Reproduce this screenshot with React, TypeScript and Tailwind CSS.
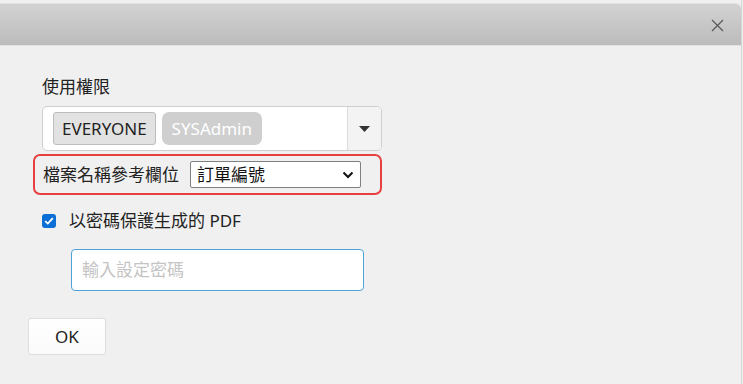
import React from "react";

export default function App() {
  return (
    <div
      className="w-[743px] h-[384px] bg-[#f0f0f0] overflow-hidden"
      style={{ fontFamily: '"Noto Sans", "Noto Sans CJK TC", sans-serif' }}
    >
      <div className="w-[742px] h-[384px] border-r border-[#d6d6d6] flex flex-col pt-[3px]">
        <div className="h-[43px] bg-gradient-to-b from-[#d2d2d2] to-[#bcbcbc] rounded-tr-[6px] border-b border-[#c4c4c4] flex items-center justify-end pr-[17px] border-t border-[#e2e2e2]">
          <svg width="13" height="13" viewBox="0 0 13 13" className="mt-[2px]">
            <path d="M1 1 L12 12 M12 1 L1 12" stroke="#5a5a5a" strokeWidth="1.3" fill="none" />
          </svg>
        </div>
        <div className="flex flex-col pl-[42px] pt-[30px]">
          <div className="h-[22px] flex items-center text-[17px] text-[#222]">使用權限</div>
          <div className="mt-[8px] w-[340px] h-[45px] bg-white border border-[#cfcfcf] rounded-[5px] flex overflow-hidden">
            <div className="flex-1 flex items-center gap-[6px] pl-[10px]">
              <div className="h-[33px] px-[8px] flex items-center bg-[#e2e2e2] border border-[#bdbdbd] rounded-[3px] text-[17px] text-[#222]">
                EVERYONE
              </div>
              <div className="h-[33px] px-[10px] flex items-center bg-[#cfcfcf] rounded-[7px] text-[17px] text-white">
                SYSAdmin
              </div>
            </div>
            <div className="w-[34px] border-l border-[#dcdcdc] bg-[#f3f3f3] flex items-center justify-center">
              <svg width="11" height="6" viewBox="0 0 11 6">
                <path d="M0 0 L11 0 L5.5 6 Z" fill="#333" />
              </svg>
            </div>
          </div>
          <div className="-ml-[9px] mt-[3px] w-[349px] h-[41px] border-2 border-[#e84040] rounded-[7px] flex items-center pl-[8px]">
            <div className="text-[17px] text-[#222] leading-[22px] whitespace-nowrap">檔案名稱參考欄位</div>
            <div className="ml-[11px] w-[171px] h-[27px] bg-white border border-[#808080] rounded-[2px] flex items-center justify-between pl-[6px] pr-[6px]">
              <span className="text-[17px] text-[#111] leading-[22px]">訂單編號</span>
              <svg width="12" height="8" viewBox="0 0 12 8">
                <path d="M1.5 1.5 L6 6 L10.5 1.5" stroke="#111" strokeWidth="2" fill="none" />
              </svg>
            </div>
          </div>
          <div className="mt-[18px] h-[16px] flex items-center">
            <div className="w-[14px] h-[14px] rounded-[3px] bg-[#0b6fd6] flex items-center justify-center">
              <svg width="10" height="8" viewBox="0 0 10 8">
                <path d="M1.2 4.2 L3.8 6.6 L8.8 1.2" stroke="#fff" strokeWidth="1.8" fill="none" />
              </svg>
            </div>
            <span className="ml-[13px] text-[17px] text-[#222] leading-[22px] whitespace-nowrap">以密碼保護生成的 PDF</span>
          </div>
          <div className="ml-[29px] mt-[20px] w-[293px] h-[42px] bg-white border border-[#4ea3d9] rounded-[4px] flex items-center pl-[10px]">
            <span className="text-[17px] text-[#c4c4c4] leading-[22px]">輸入設定密碼</span>
          </div>
          <div className="-ml-[14px] mt-[27px] w-[78px] h-[37px] bg-gradient-to-b from-white to-[#fafafa] border border-[#dedede] rounded-[3px] flex items-center justify-center text-[17px] text-[#222]">
            OK
          </div>
        </div>
      </div>
    </div>
  );
}
